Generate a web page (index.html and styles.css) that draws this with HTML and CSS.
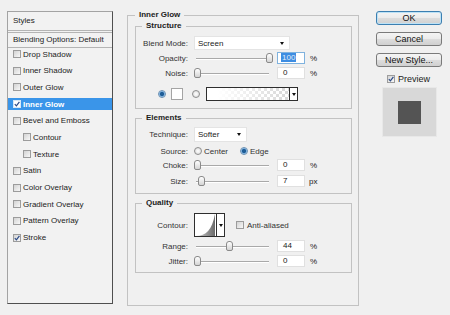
FILE: index.html
```html
<!DOCTYPE html>
<html lang="en">
<head>
    <meta charset="UTF-8">
    <meta name="viewport" content="width=device-width, initial-scale=1.0">
    <title>Layer Style</title>
    <link rel="stylesheet" href="styles.css">
</head>
<body>
    <div class="dialog">
        <!-- Styles list -->
        <div class="styles-panel">
            <div class="styles-head">Styles</div>
            <div class="blend-head">Blending Options: Default</div>
            <ul class="style-list">
                <li><span class="check"></span>Drop Shadow</li>
                <li><span class="check"></span>Inner Shadow</li>
                <li><span class="check"></span>Outer Glow</li>
                <li class="active"><span class="check on"><svg viewBox="0 0 6 6"><path d="M0.8 3.2 L2.4 4.9 L5.4 0.8"/></svg></span>Inner Glow</li>
                <li><span class="check"></span>Bevel and Emboss</li>
                <li class="sub"><span class="check"></span>Contour</li>
                <li class="sub"><span class="check"></span>Texture</li>
                <li><span class="check"></span>Satin</li>
                <li><span class="check"></span>Color Overlay</li>
                <li><span class="check"></span>Gradient Overlay</li>
                <li><span class="check"></span>Pattern Overlay</li>
                <li><span class="check on"><svg viewBox="0 0 6 6"><path d="M0.8 3.2 L2.4 4.9 L5.4 0.8"/></svg></span>Stroke</li>
            </ul>
        </div>

        <!-- Inner Glow settings -->
        <fieldset class="group settings">
            <legend>Inner Glow</legend>

            <fieldset class="group structure">
                <legend>Structure</legend>
                <div class="row h14">
                    <span class="lbl">Blend Mode:</span>
                    <div class="select blend">Screen</div>
                </div>
                <div class="row mt2">
                    <span class="lbl">Opacity:</span>
                    <div class="slider"><span class="thumb" style="--v: 1"></span></div>
                    <span class="num focus"><span class="sel">100</span></span>
                    <span class="unit">%</span>
                </div>
                <div class="row mt3">
                    <span class="lbl">Noise:</span>
                    <div class="slider"><span class="thumb" style="--v: 0"></span></div>
                    <span class="num">0</span>
                    <span class="unit">%</span>
                </div>
                <div class="row h14 mt8 color-row">
                    <span class="radio on"></span>
                    <span class="swatch"></span>
                    <span class="radio second"></span>
                    <span class="gradient"><span class="drop"></span></span>
                </div>
            </fieldset>

            <fieldset class="group elements">
                <legend>Elements</legend>
                <div class="row h15">
                    <span class="lbl">Technique:</span>
                    <div class="select technique">Softer</div>
                </div>
                <div class="row mt3">
                    <span class="lbl">Source:</span>
                    <span class="radio"></span><span class="opt">Center</span>
                    <span class="radio on edge"></span><span class="opt">Edge</span>
                </div>
                <div class="row mt2">
                    <span class="lbl">Choke:</span>
                    <div class="slider"><span class="thumb" style="--v: 0"></span></div>
                    <span class="num">0</span>
                    <span class="unit">%</span>
                </div>
                <div class="row mt4">
                    <span class="lbl">Size:</span>
                    <div class="slider"><span class="thumb" style="--v: 0.06"></span></div>
                    <span class="num">7</span>
                    <span class="unit px">px</span>
                </div>
            </fieldset>

            <fieldset class="group quality">
                <legend>Quality</legend>
                <div class="row h24">
                    <span class="lbl">Contour:</span>
                    <span class="contour">
                        <svg width="21" height="22" viewBox="0 0 21 22">
                            <defs>
                                <linearGradient id="curve" x1="0" y1="0" x2="1" y2="0">
                                    <stop offset="0" stop-color="#cfcfcf"/>
                                    <stop offset="1" stop-color="#6a6a6a"/>
                                </linearGradient>
                            </defs>
                            <path d="M1 22 C11 22 17 16 20 0 V22 Z" fill="url(#curve)"/>
                        </svg>
                        <span class="drop"></span>
                    </span>
                    <span class="check anti"></span><span class="opt">Anti-aliased</span>
                </div>
                <div class="row mt3">
                    <span class="lbl">Range:</span>
                    <div class="slider"><span class="thumb" style="--v: 0.44"></span></div>
                    <span class="num">44</span>
                    <span class="unit">%</span>
                </div>
                <div class="row mt3">
                    <span class="lbl">Jitter:</span>
                    <div class="slider"><span class="thumb" style="--v: 0"></span></div>
                    <span class="num">0</span>
                    <span class="unit">%</span>
                </div>
            </fieldset>
        </fieldset>

        <!-- Buttons and preview -->
        <div class="side">
            <button class="btn default">OK</button>
            <button class="btn">Cancel</button>
            <button class="btn">New Style...</button>
            <div class="preview-check">
                <span class="check on"><svg viewBox="0 0 6 6"><path d="M0.8 3.2 L2.4 4.9 L5.4 0.8"/></svg></span>Preview
            </div>
            <div class="preview"><div class="preview-swatch"></div></div>
        </div>
    </div>
</body>
</html>
```

FILE: styles.css
```css
body {
    margin: 0;
    width: 450px;
    height: 315px;
    overflow: hidden;
    background-color: #f0f0f0;
    font-family: "Liberation Sans", Arial, sans-serif;
    font-size: 8px;
    color: #222222;
}
.dialog {
    display: flex;
    align-items: flex-start;
    padding: 10px 0 0 7px;
}

/* styles list */
.styles-panel {
    box-sizing: border-box;
    width: 106px;
    height: 293px;
    margin-top: 1px;
    border: 1px solid #a3a3a3;
    border-right-color: #4f4f4f;
    border-bottom-color: #4f4f4f;
    background-color: #f2f2f2;
}
.styles-head {
    height: 18px;
    line-height: 18px;
    padding-left: 5px;
    border-bottom: 1px solid #b4b4b4;
}
.blend-head {
    height: 14px;
    line-height: 14px;
    margin-top: 1px;
    padding-left: 5px;
    border-top: 1px solid #b4b4b4;
    border-bottom: 1px solid #b4b4b4;
}
.style-list {
    list-style: none;
    margin: 0;
    padding: 0;
}
.style-list li {
    display: flex;
    align-items: center;
    height: 12px;
    margin-bottom: 4.7px;
    padding-left: 5px;
}
.style-list li.sub {
    padding-left: 15px;
}
.style-list li.active {
    background-color: #3a95e9;
    color: #ffffff;
    font-weight: bold;
}
.style-list li.active .check {
    background: #ffffff;
    border-color: #d8e8f6;
}

/* checkbox and radio */
.check {
    display: inline-block;
    flex-shrink: 0;
    width: 6px;
    height: 6px;
    margin-right: 2px;
    border: 1px solid #9c9c9c;
    background: linear-gradient(135deg, #d3d3d3, #f8f8f8);
}
.check svg {
    display: block;
    width: 6px;
    height: 6px;
    overflow: visible;
}
.check svg path {
    fill: none;
    stroke: #2b4a86;
    stroke-width: 1.2;
}
.radio {
    box-sizing: border-box;
    flex-shrink: 0;
    width: 8px;
    height: 8px;
    border: 1px solid #8d8d8d;
    border-radius: 50%;
    background: radial-gradient(circle, #ffffff, #d6d6d6);
}
.radio.on {
    border-color: #6b8fb0;
    background: radial-gradient(circle, #1f5d96 0 1.8px, #73aee2 2.4px, #e6f1fb 3.6px);
}

/* settings groups */
.group {
    margin: 0;
    border: 1px solid #c2c2c2;
    min-inline-size: 0;
}
.group legend {
    padding: 0 4px;
    line-height: 10px;
    font-weight: bold;
    color: #1c1c1c;
}
.settings {
    box-sizing: border-box;
    width: 232px;
    margin-left: 14px;
    padding: 1px 6px 32px 7px;
}
.structure {
    padding: 5px 7px 7px 6px;
}
.elements {
    margin-top: 4px;
    padding: 4px 7px 6px 6px;
}
.quality {
    margin-top: 4px;
    padding: 5px 7px 5px 6px;
}

.row {
    display: flex;
    align-items: center;
    height: 12px;
}
.h14 { height: 14px; }
.h15 { height: 15px; }
.h24 { height: 24px; }
.mt2 { margin-top: 2px; }
.mt3 { margin-top: 3px; }
.mt4 { margin-top: 4px; }
.mt8 { margin-top: 8px; }

.lbl {
    flex-shrink: 0;
    width: 46px;
    margin-right: 6px;
    text-align: right;
    color: #333333;
}
.opt {
    margin-left: 2px;
    color: #333333;
}

/* dropdowns */
.select {
    box-sizing: border-box;
    display: flex;
    align-items: center;
    justify-content: space-between;
    height: 100%;
    padding: 0 5px 0 3px;
    background-color: #ffffff;
    border: 1px solid #e4e4e4;
}
.select::after,
.drop::after {
    content: "";
    border-left: 2.5px solid transparent;
    border-right: 2.5px solid transparent;
    border-top: 3px solid #111111;
}
.select.blend {
    width: 96px;
}
.select.technique {
    width: 53px;
}

/* sliders */
.slider {
    position: relative;
    flex-shrink: 0;
    width: 79px;
    height: 12px;
}
.slider::before {
    content: "";
    position: absolute;
    left: 2px;
    right: 4px;
    top: 6px;
    height: 1px;
    background-color: #a9a9a9;
    border-bottom: 1px solid #ffffff;
}
.thumb {
    position: absolute;
    top: 1px;
    left: calc((100% - 7px) * var(--v));
    width: 5px;
    height: 8px;
    border: 1px solid #8a8a8a;
    border-radius: 3px 3px 2px 2px;
    background: linear-gradient(#ffffff, #d4d4d4);
}
.num {
    box-sizing: border-box;
    flex-shrink: 0;
    width: 28px;
    height: 12px;
    line-height: 10px;
    margin-left: 4px;
    padding-left: 5px;
    background-color: #ffffff;
    border: 1px solid #e0e0e0;
}
.num.focus {
    border-color: #7fb2de;
    padding-left: 3px;
}
.sel {
    padding: 0 1px;
    background-color: #3d8de2;
    color: #e2ecf7;
}
.unit {
    margin-left: 5px;
}
.unit.px {
    margin-left: 4px;
}

/* colour row */
.color-row {
    padding-left: 16px;
}
.swatch {
    box-sizing: border-box;
    width: 12px;
    height: 12px;
    margin-left: 5px;
    background-color: #ffffff;
    border: 1px solid #a4a4a4;
}
.radio.second {
    margin-left: 9px;
}
.radio.edge {
    margin-left: 12px;
}
.gradient {
    box-sizing: border-box;
    display: flex;
    justify-content: flex-end;
    width: 92px;
    height: 14px;
    margin-left: 6px;
    border: 1px solid #2e2e2e;
    background:
        linear-gradient(to right, #ffffff 12%, rgba(255, 255, 255, 0.15) 88%),
        repeating-conic-gradient(#d2d2d2 0 25%, #ffffff 0 50%) 0 0 / 6px 6px;
}
.drop {
    display: flex;
    align-items: center;
    justify-content: center;
    width: 7px;
    border-left: 1px solid #2e2e2e;
    background-color: #ffffff;
}

/* contour */
.contour {
    box-sizing: border-box;
    display: flex;
    height: 24px;
    background-color: #ffffff;
    border: 1px solid #2e2e2e;
}
.contour svg {
    display: block;
}
.check.anti {
    margin-left: 11px;
    margin-right: 1px;
}

/* right column */
.side {
    width: 66px;
    margin-left: 17px;
    margin-top: 1px;
    font-size: 9px;
}
.btn {
    display: block;
    box-sizing: border-box;
    width: 66px;
    height: 14px;
    margin: 0 0 7px;
    padding: 0;
    font: inherit;
    color: #111111;
    border: 1px solid #7a7a7a;
    border-radius: 3px;
    background: linear-gradient(#f4f4f4 0, #ebebeb 50%, #dddddd 50%, #d0d0d0 100%);
}
.btn.default {
    border-color: #3c7fb1;
    box-shadow: inset 0 0 0 1px #bde2f6;
}
.preview-check {
    display: flex;
    align-items: center;
    height: 9px;
    padding-left: 11px;
    color: #222222;
}
.preview-check .check {
    margin-right: 3px;
}
.preview {
    box-sizing: border-box;
    display: flex;
    justify-content: center;
    align-items: center;
    width: 55px;
    height: 50px;
    margin: 4px 0 0 6px;
    background-color: #d8d8d8;
    border: 1px solid #e8e8e8;
}
.preview-swatch {
    width: 23px;
    height: 23px;
    background-color: #545454;
}
```
